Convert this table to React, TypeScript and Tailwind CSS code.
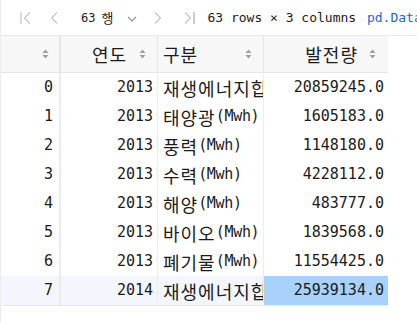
import React from "react";

const rows: [number, number, string, string][] = [
  [0, 2013, "재생에너지합계(Mwh)", "20859245.0"],
  [1, 2013, "태양광(Mwh)", "1605183.0"],
  [2, 2013, "풍력(Mwh)", "1148180.0"],
  [3, 2013, "수력(Mwh)", "4228112.0"],
  [4, 2013, "해양(Mwh)", "483777.0"],
  [5, 2013, "바이오(Mwh)", "1839568.0"],
  [6, 2013, "폐기물(Mwh)", "11554425.0"],
  [7, 2014, "재생에너지합계(Mwh)", "25939134.0"],
];

// hangul runs get the wider CJK face so they take two columns, like the notebook font
function Txt({ s }: { s: string }) {
  const parts = s.split(/([가-힣]+)/).filter(Boolean);
  return (
    <>
      {parts.map((p, i) =>
        /[가-힣]/.test(p) ? (
          <span key={i} className="font-['Noto_Sans_CJK_KR',sans-serif] text-[18px] leading-none tracking-[1px]">
            {p}
          </span>
        ) : (
          <span key={i} className="tracking-[-0.3px]">{p}</span>
        )
      )}
    </>
  );
}

function SortIcon() {
  return (
    <svg width="7" height="10" viewBox="0 0 7 10" className="shrink-0">
      <path d="M3.5 0.5 L6.5 4 H0.5 Z" fill="#a0a0a0" />
      <path d="M3.5 9.5 L6.5 6 H0.5 Z" fill="#a0a0a0" />
    </svg>
  );
}

function Chevron({ dir, bar }: { dir: "l" | "r"; bar?: boolean }) {
  const d = dir === "l" ? "M10 1.5 L4.5 7 L10 12.5" : "M3 1.5 L8.5 7 L3 12.5";
  return (
    <svg width="13" height="14" viewBox="0 0 13 14" fill="none" stroke="#c4c4c4" strokeWidth="1.2">
      <path d={d} />
      {bar && (dir === "l" ? <path d="M1 1 V13" /> : <path d="M12 1 V13" stroke="#a8a8a8" />)}
    </svg>
  );
}

export default function App() {
  return (
    <div className="h-[323px] w-[417px] overflow-hidden border-l border-[#ececec] bg-white font-['DejaVu_Sans_Mono','Noto_Sans_CJK_KR',monospace] text-[#1b1b1b]">
      <div className="flex h-[36px] items-center whitespace-nowrap border-b border-[#ebebeb]">
        <div className="ml-[19px]">
          <Chevron dir="l" bar />
        </div>
        <div className="ml-[14px]">
          <Chevron dir="l" />
        </div>
        <div className="ml-[21px] flex items-center text-[12px]">
          63 <span className="ml-[6px] font-['Noto_Sans_CJK_KR',sans-serif] text-[13px]">행</span>
          <svg width="10" height="6" viewBox="0 0 10 6" className="ml-[14px] mt-[2px]" fill="none" stroke="#8c8c8c" strokeWidth="1.2">
            <path d="M1 0.8 L5 4.8 L9 0.8" />
          </svg>
        </div>
        <div className="ml-[15px]">
          <Chevron dir="r" />
        </div>
        <div className="ml-[17px]">
          <Chevron dir="r" bar />
        </div>
        <div className="ml-[12px] text-[13px]">
          63 rows × 3 columns <span className="ml-[3px] text-[#2563d6]">pd.DataFrame</span>
        </div>
      </div>

      <div className="w-[387px] border-b border-[#e8e8ec]">
        <div className="flex h-[37px] items-center border-b border-[#e6e6e6] bg-[#f7f7f8] text-[15px]">
          <div className="flex h-full w-[60px] items-center justify-end border-r-2 border-[#e6e6ea] pr-[10px]">
            <SortIcon />
          </div>
          <div className="flex h-full w-[97px] items-center justify-end gap-[12px] border-r border-[#e6e6ea] pr-[11px]">
            <Txt s="연도" />
            <SortIcon />
          </div>
          <div className="flex h-full w-[106px] items-center justify-between border-r border-[#e6e6ea] pl-[5px] pr-[11px]">
            <Txt s="구분" />
            <SortIcon />
          </div>
          <div className="flex h-full w-[124px] items-center justify-end gap-[11px] pr-[12px]">
            <Txt s="발전량" />
            <SortIcon />
          </div>
        </div>

        {rows.map(([i, y, k, v]) => {
          const hot = i === 7;
          return (
            <div key={i} className={`flex h-[29px] text-[15px] ${hot ? "bg-[#f3f7fd]" : ""}`}>
              <div className="flex w-[60px] items-center justify-end border-r-2 border-[#ebebef] pr-[6px]">{i}</div>
              <div className="flex w-[97px] items-center justify-end border-r border-[#ededf0] pr-[4px]">{y}</div>
              <div className="flex w-[106px] items-center overflow-hidden whitespace-nowrap border-r border-[#ededf0] pl-[5px]">
                <Txt s={k} />
              </div>
              <div className={`flex w-[124px] items-center justify-end pr-[4px] ${hot ? "bg-[#a8d1fb]" : ""}`}>{v}</div>
            </div>
          );
        })}
      </div>
    </div>
  );
}
